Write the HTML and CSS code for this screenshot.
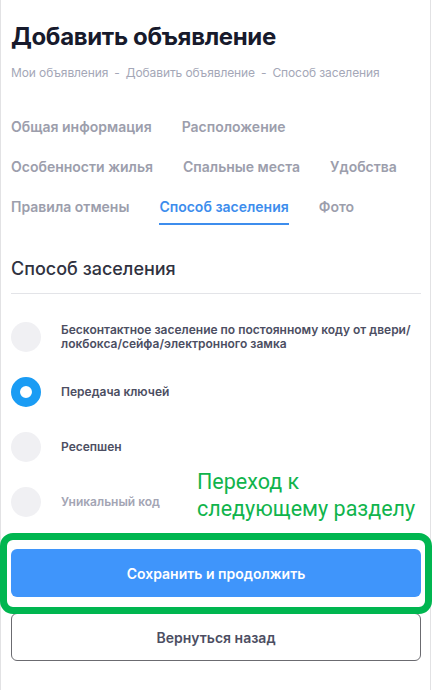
FILE: index.html
```html
<!DOCTYPE html>
<html lang="ru">
<head>
<meta charset="UTF-8" />
<meta name="viewport" content="width=device-width, initial-scale=1" />
<title>Добавить объявление</title>
<link rel="stylesheet" href="styles.css">
</head>
<body>
  <div class="page">
    <h1 class="title">Добавить объявление</h1>
    <div class="crumbs">
      <a>Мои объявления</a><span class="sep">-</span><a>Добавить объявление</a><span class="sep">-</span><a>Способ заселения</a>
    </div>

    <nav class="tabs">
      <div class="tab-row">
        <a class="tab">Общая информация</a>
        <a class="tab">Расположение</a>
      </div>
      <div class="tab-row">
        <a class="tab">Особенности жилья</a>
        <a class="tab">Спальные места</a>
        <a class="tab">Удобства</a>
      </div>
      <div class="tab-row">
        <a class="tab">Правила отмены</a>
        <a class="tab active">Способ заселения</a>
        <a class="tab">Фото</a>
      </div>
    </nav>

    <h2 class="section-title">Способ заселения</h2>

    <div class="options">
      <label class="option">
        <span class="radio"></span>
        <span class="option-text">Бесконтактное заселение по постоянному коду от двери/<br>локбокса/сейфа/электронного замка</span>
      </label>
      <label class="option">
        <span class="radio checked"></span>
        <span class="option-text">Передача ключей</span>
      </label>
      <label class="option">
        <span class="radio"></span>
        <span class="option-text">Ресепшен</span>
      </label>
      <label class="option disabled">
        <span class="radio"></span>
        <span class="option-text">Уникальный код</span>
      </label>
    </div>

    <div class="actions">
      <button class="btn btn-primary" type="button">Сохранить и продолжить</button>
      <button class="btn btn-outline" type="button">Вернуться назад</button>
    </div>

    <!-- подсказка поверх макета -->
    <div class="hint">Переход к<br>следующему разделу</div>
    <div class="hint-frame"></div>
  </div>
</body>
</html>
```

FILE: styles.css
```css
* {
  box-sizing: border-box;
}
body {
  margin: 0;
  background: #fff;
  font-family: Inter, 'Noto Sans', sans-serif;
}
.page {
  position: relative;
  width: 431px;
  min-height: 690px;
  padding: 22px 9px 0 10px;
  border-left: 1px solid #e2e2e4;
  border-right: 1px solid #e2e2e4;
}
.title {
  margin: 0;
  font-size: 24px;
  line-height: 30px;
  font-weight: 700;
  color: #171a2c;
  letter-spacing: -0.35px;
}
.crumbs {
  margin-top: 13px;
  font-size: 12px;
  line-height: 16px;
  color: #a4a7b7;
  letter-spacing: -0.1px;
}
.crumbs .sep {
  margin: 0 6px;
}
.tabs {
  margin-top: 26px;
  display: flex;
  flex-direction: column;
  gap: 2px;
}
.tab-row {
  display: flex;
  gap: 30px;
}
.tab {
  padding: 10px 0 6px;
  font-size: 14px;
  line-height: 20px;
  font-weight: 600;
  color: #9c9eac;
  border-bottom: 2px solid transparent;
}
.tab.active {
  color: #3d8ded;
  border-bottom-color: #3d8ded;
}
.section-title {
  margin: 32px 0 0;
  padding-bottom: 12px;
  font-size: 18px;
  line-height: 24px;
  font-weight: 500;
  color: #30323f;
  border-bottom: 1px solid #e3e4e8;
}
.options {
  margin-top: 28px;
  display: flex;
  flex-direction: column;
  gap: 25px;
}
.option {
  display: flex;
  align-items: center;
  gap: 20px;
  font-size: 12px;
  line-height: 14px;
  font-weight: 600;
  color: #4c4e62;
}
.option.disabled {
  color: #a3a5b4;
}
.radio {
  flex: none;
  width: 30px;
  height: 30px;
  border-radius: 50%;
  background: #f0f0f3;
}
.radio.checked {
  background: #fff;
  border: 9px solid #1a9cf4;
}
.actions {
  margin-top: 32px;
  display: flex;
  flex-direction: column;
  gap: 16px;
}
.btn {
  width: 100%;
  height: 48px;
  font-family: inherit;
  font-size: 14px;
  font-weight: 600;
  border-radius: 6px;
  cursor: pointer;
}
.btn-primary {
  background: #3f95fb;
  color: #fff;
  border: none;
}
.btn-outline {
  background: #fff;
  color: #4c4e62;
  border: 1px solid #6b6b70;
}
.hint {
  position: absolute;
  left: 196px;
  top: 468px;
  font-family: Roboto, sans-serif;
  font-size: 21.5px;
  line-height: 27px;
  color: #10b44c;
}
.hint-frame {
  position: absolute;
  left: -1px;
  top: 533px;
  width: 432px;
  height: 81px;
  border: 7px solid #00b650;
  border-radius: 13px;
}
```
